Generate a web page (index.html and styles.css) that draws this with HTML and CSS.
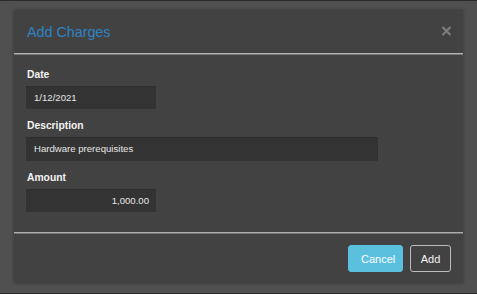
FILE: index.html
```html
<!DOCTYPE html>
<html lang="en">
<head>
  <meta charset="UTF-8">
  <meta name="viewport" content="width=device-width, initial-scale=1.0">
  <title>Add Charges</title>
  <link rel="stylesheet" href="styles.css">
</head>
<body>
  <div class="modal">
    <div class="modal-header">
      <p class="modal-title">Add Charges</p>
      <span class="close">
        <svg width="11" height="10" viewBox="0 0 11 10">
          <path d="M1.5 1 L9.5 9 M9.5 1 L1.5 9" stroke="#7c7c7c" stroke-width="2.2" fill="none"/>
        </svg>
      </span>
    </div>
    <div class="modal-body">
      <div class="field">
        <label class="lbl">Date</label>
        <div class="inp inp-short">1/12/2021</div>
      </div>
      <div class="field">
        <label class="lbl">Description</label>
        <div class="inp inp-long">Hardware prerequisites</div>
      </div>
      <div class="field">
        <label class="lbl">Amount</label>
        <div class="inp inp-short inp-num">1,000.00</div>
      </div>
    </div>
    <div class="modal-footer">
      <button class="btn btn-cancel">Cancel</button>
      <button class="btn btn-add">Add</button>
    </div>
  </div>
</body>
</html>
```

FILE: styles.css
```css
html {
  background-color: #2c2c2c;
}
body {
  margin: 0;
  height: 283px;
  padding: 9px 14px 0;
  border-top: 1px solid #2b2b2b;
  border-bottom: 1px solid #2b2b2b;
  background-color: #505050;
  font-family: "Liberation Sans", Arial, sans-serif;
}
p {
  margin: 0;
  padding: 0;
}
.modal {
  background-color: #424242;
  box-shadow: 0 0 3px rgba(0, 0, 0, 0.35);
  display: flex;
  flex-direction: column;
}
.modal-header {
  height: 43px;
  padding: 0 13px;
  display: flex;
  justify-content: space-between;
  align-items: center;
  border-bottom: 1px solid #b2b2b2;
  box-shadow: 0 1px 0 #7a7a7a;
  margin-bottom: 1px;
}
.modal-title {
  font-size: 14.3px;
  color: #2f82c4;
  padding-top: 1px;
}
.close {
  display: flex;
  margin-right: -2px;
  margin-top: -2px;
}
.modal-body {
  padding: 13px 12px 20px;
}
.field {
  margin-bottom: 10px;
}
.field:last-child {
  margin-bottom: 0;
}
.lbl {
  display: block;
  height: 14px;
  line-height: 14px;
  margin: 0 0 4px 1px;
  font-size: 10.3px;
  font-weight: bold;
  color: #f2f2f2;
}
.inp {
  height: 23px;
  line-height: 23px;
  box-sizing: border-box;
  padding: 0 7px 0 8px;
  background-color: #333333;
  box-shadow: inset 0 1px 0 #2e2e2e;
  font-size: 9.6px;
  color: #e6e6e6;
}
.inp-short {
  width: 130px;
}
.inp-long {
  width: 352px;
  height: 24px;
}
.inp-num {
  text-align: right;
}
.modal-footer {
  border-top: 1px solid #ababab;
  box-shadow: inset 0 1px 0 #777;
  padding: 12px 12px 11px;
  display: flex;
  justify-content: flex-end;
  gap: 7px;
}
.btn {
  height: 27px;
  padding: 0 12px;
  border-radius: 3px;
  font-family: "Liberation Sans", Arial, sans-serif;
  font-size: 11px;
  color: #ffffff;
}
.btn-cancel {
  width: 55px;
  background-color: #5bc0de;
  border: 1px solid #5bc0de;
}
.btn-add {
  width: 41px;
  padding: 0;
  background-color: transparent;
  border: 1px solid #bdbdbd;
  color: #f4f4f4;
}
```
